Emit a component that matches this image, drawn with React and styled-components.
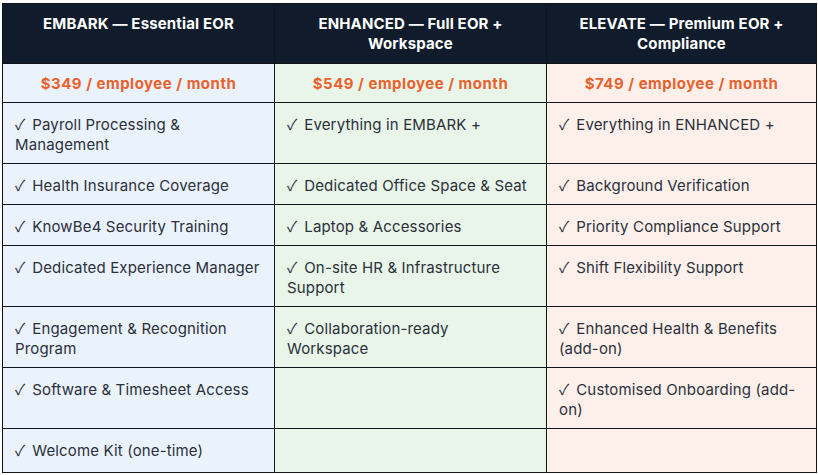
import React from 'react'
import styled, { createGlobalStyle } from 'styled-components'

const GlobalStyle = createGlobalStyle`
  html, body {
    margin: 0;
    background: #ffffff;
  }
  body {
    font-family: Inter, "Liberation Sans", sans-serif;
  }
`

const tones = {
  embark: '#eaf2fc',
  enhanced: '#e8f5e8',
  elevate: '#fdf0eb',
}

const plans = [
  { key: 'embark', title: 'EMBARK — Essential EOR', price: '$349 / employee / month' },
  { key: 'enhanced', title: 'ENHANCED — Full EOR + Workspace', price: '$549 / employee / month' },
  { key: 'elevate', title: 'ELEVATE — Premium EOR + Compliance', price: '$749 / employee / month' },
]

const rows = [
  ['Payroll Processing & Management', 'Everything in EMBARK +', 'Everything in ENHANCED +'],
  ['Health Insurance Coverage', 'Dedicated Office Space & Seat', 'Background Verification'],
  ['KnowBe4 Security Training', 'Laptop & Accessories', 'Priority Compliance Support'],
  ['Dedicated Experience Manager', 'On-site HR & Infrastructure Support', 'Shift Flexibility Support'],
  ['Engagement & Recognition Program', 'Collaboration-ready Workspace', 'Enhanced Health & Benefits (add-on)'],
  ['Software & Timesheet Access', null, 'Customised Onboarding (add-on)'],
  ['Welcome Kit (one-time)', null, null],
]

const Page = styled.div`
  padding: 3px 0 0 2px;
`

const Table = styled.div`
  width: 815px;
  display: grid;
  grid-template-columns: 271px 271px 269px;
  gap: 1px;
  background: #111418;
  border: 1px solid #111418;
  box-sizing: border-box;
`

const HeadCell = styled.div`
  background: #101c2c;
  color: #ffffff;
  font-weight: 700;
  font-size: 15px;
  line-height: 20px;
  letter-spacing: 0.15px;
  text-align: center;
  padding: 10px 24px 9px;
`

const PriceCell = styled.div`
  background: ${p => tones[p.$tone]};
  color: #e8612c;
  font-weight: 700;
  font-size: 15px;
  line-height: 20px;
  letter-spacing: 0.5px;
  text-align: center;
  padding: 10px 12px 8px;
`

const Cell = styled.div`
  background: ${p => tones[p.$tone]};
  color: #2b303b;
  font-size: 15px;
  line-height: 20px;
  letter-spacing: 0.15px;
  padding: 12px 14px ${p => (p.$last ? '11px' : '8px')} 12px;
  min-height: 20px;
`

const Check = styled.span`
  display: inline-block;
  font-family: "Noto Sans CJK JP", "DejaVu Sans", sans-serif;
  font-size: 15px;
  line-height: 1;
  letter-spacing: 0;
  margin-right: 7px;
`

export default function App() {
  return (
    <Page>
      <GlobalStyle />
      <Table>
        {plans.map(p => (
          <HeadCell key={p.key}>{p.title}</HeadCell>
        ))}
        {plans.map(p => (
          <PriceCell key={p.key} $tone={p.key}>{p.price}</PriceCell>
        ))}
        {rows.map((row, i) =>
          row.map((item, j) => (
            <Cell key={`${i}-${j}`} $tone={plans[j].key} $last={i === rows.length - 1}>
              {item && (
                <>
                  <Check>✓</Check>
                  {item}
                </>
              )}
            </Cell>
          ))
        )}
      </Table>
    </Page>
  )
}
